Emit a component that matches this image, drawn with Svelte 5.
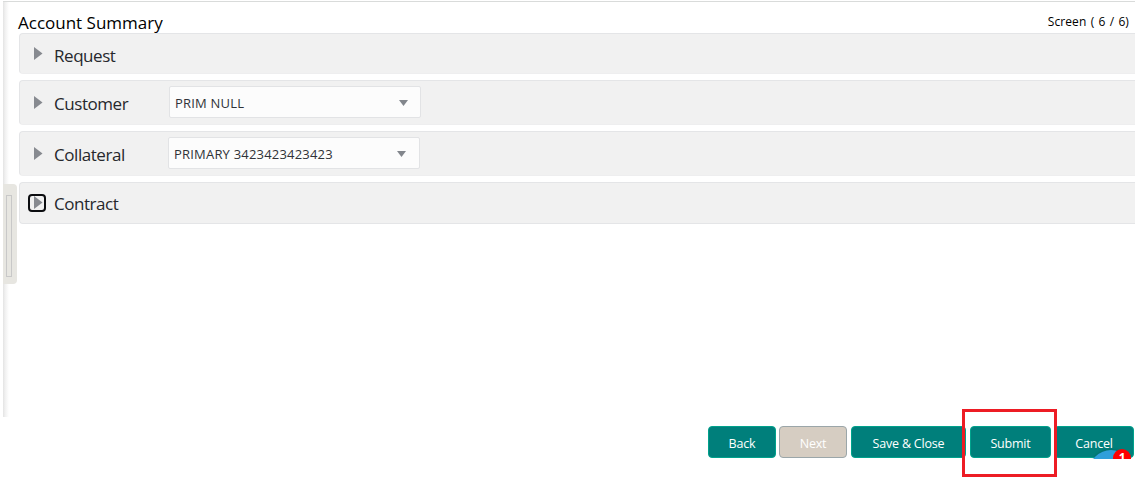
<script lang="ts">
	interface Section {
		id: string
		label: string
		options?: string[]
	}

	const sections: Section[] = [
		{ id: 'request', label: 'Request' },
		{ id: 'customer', label: 'Customer', options: ['PRIM NULL'] },
		{ id: 'collateral', label: 'Collateral', options: ['PRIMARY 3423423423423'] },
		{ id: 'contract', label: 'Contract' }
	]

	const actions = [
		{ id: 'back', label: 'Back' },
		{ id: 'next', label: 'Next', disabled: true },
		{ id: 'save', label: 'Save & Close' },
		{ id: 'submit', label: 'Submit' },
		{ id: 'cancel', label: 'Cancel' }
	]

	let focused = $state('contract')
</script>

<div class="page">
	<main class="workspace">
		<div class="splitter">
			<div class="handle"><div class="grip"></div></div>
		</div>
		<div class="content">
			<header class="heading">
				<h1>Account Summary</h1>
				<span class="step">Screen ( 6 / 6)</span>
			</header>
			<div class="sections">
				{#each sections as section (section.id)}
					<section class="row {section.id}">
						<button
							class="toggle"
							class:focused={focused === section.id}
							aria-label={section.label}
							onclick={() => focused = section.id}
						>
							<svg width="9" height="13" viewBox="0 0 9 13"><path d="M0 0L8.5 6.5L0 13Z" fill="#878a90" /></svg>
						</button>
						<h2>{section.label}</h2>
						{#if section.options}
							<div class="select" role="combobox" aria-expanded="false" aria-controls="{section.id}-list" tabindex="0">
								<span class="value">{section.options[0]}</span>
								<svg width="9" height="6" viewBox="0 0 9 6"><path d="M0 0H9L4.5 6Z" fill="#82868c" /></svg>
							</div>
						{/if}
					</section>
				{/each}
			</div>
		</div>
	</main>

	<footer class="actions">
		{#each actions as action (action.id)}
			<button class="action {action.id}" disabled={action.disabled}>
				<span>{action.label}</span>
				{#if action.id === 'cancel'}
					<svg class="chat" width="44" height="12" viewBox="0 0 44 12">
						<defs>
							<filter id="soft" x="-20%" y="-20%" width="140%" height="140%">
								<feGaussianBlur stdDeviation="1.5" />
							</filter>
						</defs>
						<circle cx="22" cy="24" r="21" fill="#003c3c" opacity="0.5" filter="url(#soft)" />
						<circle cx="22" cy="25" r="22" fill="#2f9fda" />
						<circle cx="33" cy="11" r="9" fill="#f00" />
						<text x="33" y="15" text-anchor="middle">1</text>
					</svg>
				{/if}
			</button>
		{/each}
		<div class="highlight"></div>
	</footer>
</div>

<style>
	:global(body) {
		background: #fff;
	}

	.page {
		width: 1141px;
		height: 483px;
		box-sizing: border-box;
		padding: 1px 6px 0 3px;
		overflow: hidden;
		font-family: "Open Sans", "Noto Sans", sans-serif;
		color: #000;
	}

	.workspace {
		display: flex;
		height: 416px;
		box-sizing: border-box;
		border-top: 1px solid #d9dbda;
	}

	.splitter {
		width: 16px;
		padding-top: 182px;
		box-sizing: border-box;
		background: linear-gradient(to right, #e3e3e3, #f0f0f0 2px, #fff 6px);
	}

	.handle {
		width: 14px;
		height: 100px;
		box-sizing: border-box;
		padding: 11px 5px 7px 3px;
		background: #e7e6e1;
		border-radius: 0 4px 4px 0;
	}

	.grip {
		height: 100%;
		box-sizing: border-box;
		border: 1px solid #c8c8c8;
	}

	.content {
		flex: 1;
	}

	.heading {
		display: flex;
		justify-content: space-between;
		height: 31px;
		padding: 0 6px 0 0;
	}

	h1 {
		margin: 9px 0 0 -1px;
		font-size: 17px;
		line-height: 24px;
		font-weight: 400;
		white-space: nowrap;
	}

	.step {
		margin-top: 11px;
		font-size: 12px;
		line-height: 18px;
		letter-spacing: 0.1px;
		word-spacing: 1px;
		white-space: nowrap;
	}

	.sections {
		display: flex;
		flex-direction: column;
		gap: 6px;
	}

	.row {
		display: flex;
		height: 45px;
		box-sizing: border-box;
		padding-left: 8px;
		background: #f1f1f1;
		border: 1px solid #e4e5e7;
		border-right: 0;
		border-bottom-color: #eeeeef;
		border-radius: 4px 0 0 4px;
	}

	.request {
		height: 41px;
	}

	.contract {
		height: 42px;
		border-bottom-color: #e4e5e7;
	}

	.toggle {
		display: flex;
		justify-content: flex-start;
		width: 18px;
		height: 18px;
		box-sizing: border-box;
		margin-top: 11px;
		padding: 0 0 0 4px;
		border: 2px solid transparent;
		border-radius: 4px;
		background: none;
	}

	.toggle svg {
		display: block;
		flex: none;
	}

	.customer .toggle,
	.collateral .toggle {
		margin-top: 13px;
	}

	.toggle.focused {
		border-color: #0c0d10;
	}

	h2 {
		width: 114px;
		margin: 10px 0 0 8px;
		font-size: 17px;
		line-height: 24px;
		font-weight: 400;
		letter-spacing: -0.45px;
		color: #26282c;
	}

	.customer h2 {
		margin-top: 11px;
		width: 115px;
	}

	.collateral h2 {
		margin-top: 11px;
	}

	.contract h2 {
		margin-top: 9px;
	}

	.select {
		display: flex;
		align-items: center;
		justify-content: space-between;
		width: 252px;
		height: 32px;
		box-sizing: border-box;
		margin-top: 5px;
		padding: 0 12px 0 5px;
		background: #fcfcfc;
		border: 1px solid #e2e3e5;
		border-radius: 2px;
	}

	.select svg {
		margin-top: 2px;
	}

	.collateral .select {
		padding-right: 13px;
	}

	.value {
		font-size: 13px;
		letter-spacing: 0.2px;
		padding-top: 1px;
		color: #303338;
		white-space: nowrap;
	}

	.actions {
		position: relative;
		display: flex;
		padding: 9px 0 0 705px;
	}

	.action {
		position: relative;
		display: flex;
		align-items: center;
		justify-content: center;
		width: 68px;
		height: 32px;
		box-sizing: border-box;
		margin-right: 3px;
		padding: 2px 0 0;
		border: 1px solid #00a28c;
		border-radius: 4px;
		background: #007f7b;
		color: #fff;
		font-family: inherit;
		font-size: 12.5px;
		letter-spacing: -0.2px;
		white-space: nowrap;
	}

	.action:disabled {
		background: #d6cdc2;
		border-color: #9ba6a9;
	}

	.next {
		margin-right: 4px;
	}

	.save {
		width: 115px;
		margin-right: 4px;
	}

	.submit {
		width: 81px;
	}

	.cancel {
		width: 80px;
		margin-right: 0;
	}

	/* chat launcher peeking over the bottom edge */
	.chat {
		position: absolute;
		right: 0;
		bottom: -2px;
		overflow: hidden;
	}

	.chat text {
		font-size: 12px;
		font-weight: 700;
		fill: #fff;
	}

	.highlight {
		position: absolute;
		left: 959px;
		top: -8px;
		width: 95px;
		height: 68px;
		box-sizing: border-box;
		border: 3px solid #ed1c24;
		pointer-events: none;
	}
</style>
